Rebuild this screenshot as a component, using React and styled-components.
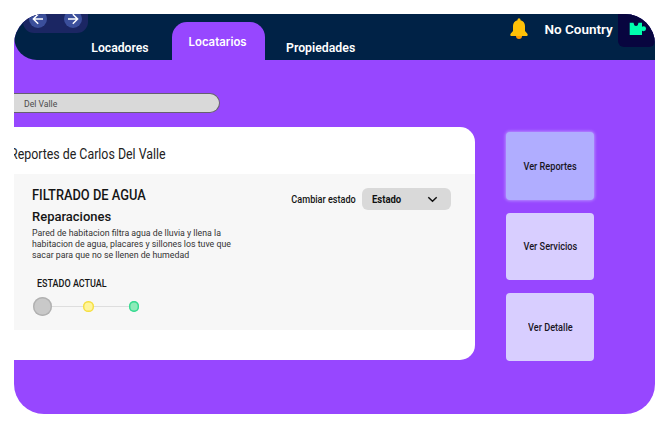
import React from "react";
import styled, { createGlobalStyle } from "styled-components";

const GlobalStyle = createGlobalStyle`
  * { box-sizing: border-box; }
  body { margin: 0; background: #fff; font-family: Roboto, "Liberation Sans", sans-serif; }
  h1, h2, h3, p { margin: 0; font-weight: 400; }
  button { font: inherit; border: 0; padding: 0; }
`;

const Screen = styled.div`
  width: 641px;
  height: 400px;
  margin: 14px;
  border-radius: 30px;
  overflow: hidden;
  background: #9747ff;
`;

const Header = styled.header`
  display: flex;
  align-items: flex-start;
  height: 45.5px;
  background: #002246;
  border-bottom-left-radius: 23px;
`;

const History = styled.div`
  display: flex;
  gap: 17px;
  width: 65px;
  height: 19px;
  margin-left: 9px;
  padding: 0 6px;
  border-radius: 0 0 11px 11px;
  background: #1b2663;
`;

const HistoryButton = styled.button`
  flex: none;
  width: 18px;
  height: 18px;
  margin-top: -4.5px;
  border-radius: 50%;
  background: #3b4f9b;
  svg { display: block; }
`;

const Tabs = styled.nav`
  display: flex;
  align-items: flex-end;
  height: 100%;
`;

const Tab = styled.a`
  width: ${(p) => p.$width}px;
  height: ${(p) => (p.$active ? 37.5 : 18.8)}px;
  padding-top: ${(p) => (p.$active ? 12.5 : 0)}px;
  padding-left: ${(p) => p.$indent}px;
  border-radius: 15px 15px 0 0;
  background: ${(p) => (p.$active ? "#9747ff" : "transparent")};
  color: #fff;
  font-family: ${(p) => (p.$active ? "Inter" : "Roboto")}, sans-serif;
  font-size: ${(p) => p.$size}px;
  font-weight: 600;
  line-height: 15px;
  white-space: nowrap;
`;

const Account = styled.div`
  display: flex;
  align-items: flex-start;
  margin-left: auto;
`;

const BellIcon = styled.svg`
  width: 18px;
  height: 22px;
  margin: 4px 16.5px 0 0;
`;

const AccountName = styled.span`
  width: 73.5px;
  padding-top: 7px;
  color: #fff;
  font-size: 13.5px;
  font-weight: 600;
  line-height: 17px;
  white-space: nowrap;
`;

const Logo = styled.div`
  width: 37px;
  height: 32.5px;
  padding: 8px 0 0 11px;
  border-radius: 0 0 6px 6px;
  background: #08053f;
  svg { display: block; }
`;

const Condensed = styled.span`
  display: inline-block;
  transform: scaleX(${(p) => p.$ratio});
  transform-origin: ${(p) => p.$origin || "left"} center;
  white-space: nowrap;
`;

const Search = styled.div`
  width: 206px;
  height: 20px;
  margin: 33.5px 0 14px;
  padding-left: 10px;
  border: 1px solid #66606f;
  border-left: 0;
  border-radius: 0 10px 10px 0;
  background: #d9d9d9;
  color: #4c4c4c;
  font-size: 9.6px;
  line-height: 19px;
`;

const Content = styled.main`
  display: flex;
  align-items: flex-start;
`;

const Card = styled.section`
  width: 461.3px;
  height: 233px;
  overflow: hidden;
  border-radius: 0 15px 15px 0;
  background: #fff;
`;

const CardTitle = styled.h1`
  height: 47px;
  margin-left: -4.5px;
  padding-top: 18px;
  color: #222;
  font-size: 13.8px;
  line-height: 18px;
`;

const Report = styled.article`
  display: flex;
  justify-content: space-between;
  height: 155.5px;
  padding: 14px 24.3px 0 18px;
  background: #f7f7f7;
  color: #151515;
`;

const ReportBody = styled.div`
  width: 220px;
`;

const ReportName = styled.h2`
  font-size: 14px;
  font-weight: 500;
  line-height: 14px;
`;

const Category = styled.h3`
  margin-top: 6px;
  font-size: 13.5px;
  font-weight: 500;
  line-height: 16px;
`;

const Description = styled.p`
  margin-top: 4px;
  color: #333;
  font-size: 9.6px;
  line-height: 10.8px;
`;

const StatusLabel = styled.p`
  margin: 17.6px 0 0 4.5px;
  font-size: 10px;
  font-weight: 500;
  line-height: 12px;
`;

const Progress = styled.div`
  display: flex;
  align-items: center;
  height: 20px;
  margin: 6.8px 0 0 1.2px;
`;

const Step = styled.span`
  width: ${(p) => p.$size}px;
  height: ${(p) => p.$size}px;
  border-radius: 50%;
  background: ${(p) => p.$fill};
  box-shadow: inset 0 0 0 1.4px ${(p) => p.$edge};
`;

const Connector = styled.span`
  width: ${(p) => p.$width}px;
  height: 1px;
  background: #dedede;
`;

const StatusField = styled.div`
  display: flex;
  align-items: center;
  gap: 6px;
  height: 22px;
  font-size: 10px;
  font-weight: 500;
`;

const Select = styled.button`
  display: flex;
  align-items: center;
  justify-content: space-between;
  width: 89px;
  height: 22px;
  padding: 0 12.8px 0 10px;
  border-radius: 6px;
  background: #d9d9d9;
  color: #111;
  font-weight: 700;
`;

const Actions = styled.aside`
  display: flex;
  flex-direction: column;
  gap: 13px;
  margin: 5px 0 0 31px;
`;

const Action = styled.button`
  width: 88.2px;
  height: 67.5px;
  padding-top: 1px;
  border-radius: 4px;
  background: ${(p) => (p.$active ? "#b0adff" : "#d8ceff")};
  box-shadow: ${(p) => (p.$active ? "0 0 3px 1px #b58cff" : "none")};
  color: #18151f;
  font-size: 10px;
  font-weight: 500;
`;

function Arrow({ back }) {
  return (
    <svg width="18" height="18" viewBox="0 0 18 18" fill="none" stroke="#fff" strokeWidth="1.5">
      <path d={back ? "M14 9H4.7M9.2 4.2L4.4 9L9.2 13.8" : "M4 9H13.3M8.8 4.2L13.6 9L8.8 13.8"} />
    </svg>
  );
}

function Bell() {
  return (
    <BellIcon viewBox="0 0 18 22">
      <path d="M6 18h6a3 3 0 0 1-6 0Z" fill="#ff9800" />
      <path d="M9 .3a1.5 1.5 0 0 1 1.5 1.5v.4c2.8.7 4.5 2.9 4.5 5.9v4.8l2.2 2.6c.7.9.8 2.5-.5 2.5H1.3c-1.3 0-1.2-1.6-.5-2.5L3 12.9V8.1c0-3 1.7-5.2 4.5-5.9v-.4A1.5 1.5 0 0 1 9 .3Z" fill="#ffc107" />
    </BellIcon>
  );
}

export default function App() {
  return (
    <>
      <GlobalStyle />
      <Screen>
        <Header>
          <History>
            <HistoryButton aria-label="Anterior"><Arrow back /></HistoryButton>
            <HistoryButton aria-label="Siguiente"><Arrow /></HistoryButton>
          </History>
          <Tabs>
            <Tab $width={84} $indent={3.3} $size={12.2}>Locadores</Tab>
            <Tab $active $width={93} $indent={16.5} $size={11.4}>Locatarios</Tab>
            <Tab $width={110} $indent={21} $size={12.3}>Propiedades</Tab>
          </Tabs>
          <Account>
            <Bell />
            <AccountName>No Country</AccountName>
            <Logo>
              <svg width="18" height="14" viewBox="0 0 18 14">
                <path d="M.7 .8H4.5L5.3 3.2A2 1.6 0 0 0 8.7 3.2L9.5 .8H13V4.8L14.6 4.3A2.3 2.3 0 0 1 14.6 9.2L13 8.7V13H.7Z" fill="#00ffae" />
              </svg>
            </Logo>
          </Account>
        </Header>
        <Search><Condensed $ratio={0.9}>Del Valle</Condensed></Search>
        <Content>
          <Card>
            <CardTitle><Condensed $ratio={0.897}>Reportes de Carlos Del Valle</Condensed></CardTitle>
            <Report>
              <ReportBody>
                <ReportName><Condensed $ratio={0.917}>FILTRADO DE AGUA</Condensed></ReportName>
                <Category><Condensed $ratio={0.963}>Reparaciones</Condensed></Category>
                <Description>
                  <Condensed $ratio={0.914}>
                    Pared de habitacion filtra agua de lluvia y llena la<br />
                    habitacion de agua, placares y sillones los tuve que<br />
                    sacar para que no se llenen de humedad
                  </Condensed>
                </Description>
                <StatusLabel><Condensed $ratio={0.9}>ESTADO ACTUAL</Condensed></StatusLabel>
                <Progress>
                  <Step $size={19} $fill="#c9c9c9" $edge="#b1b1b1" />
                  <Connector $width={31} />
                  <Step $size={10.6} $fill="#fff59b" $edge="#f5de43" />
                  <Connector $width={35} />
                  <Step $size={10.6} $fill="#8debb9" $edge="#35d990" />
                </Progress>
              </ReportBody>
              <StatusField>
                <Condensed $ratio={0.91} $origin="right">Cambiar estado</Condensed>
                <Select>
                  <Condensed $ratio={0.95}>Estado</Condensed>
                  <svg width="11" height="8" viewBox="0 0 11 8" fill="none" stroke="#111" strokeWidth="1.5">
                    <path d="M1.3 2.3L5.5 6.3L9.7 2.3" />
                  </svg>
                </Select>
              </StatusField>
            </Report>
          </Card>
          <Actions>
            <Action $active><Condensed $ratio={0.915} $origin="center">Ver Reportes</Condensed></Action>
            <Action><Condensed $ratio={0.915} $origin="center">Ver Servicios</Condensed></Action>
            <Action><Condensed $ratio={0.915} $origin="center">Ver Detalle</Condensed></Action>
          </Actions>
        </Content>
      </Screen>
    </>
  );
}
